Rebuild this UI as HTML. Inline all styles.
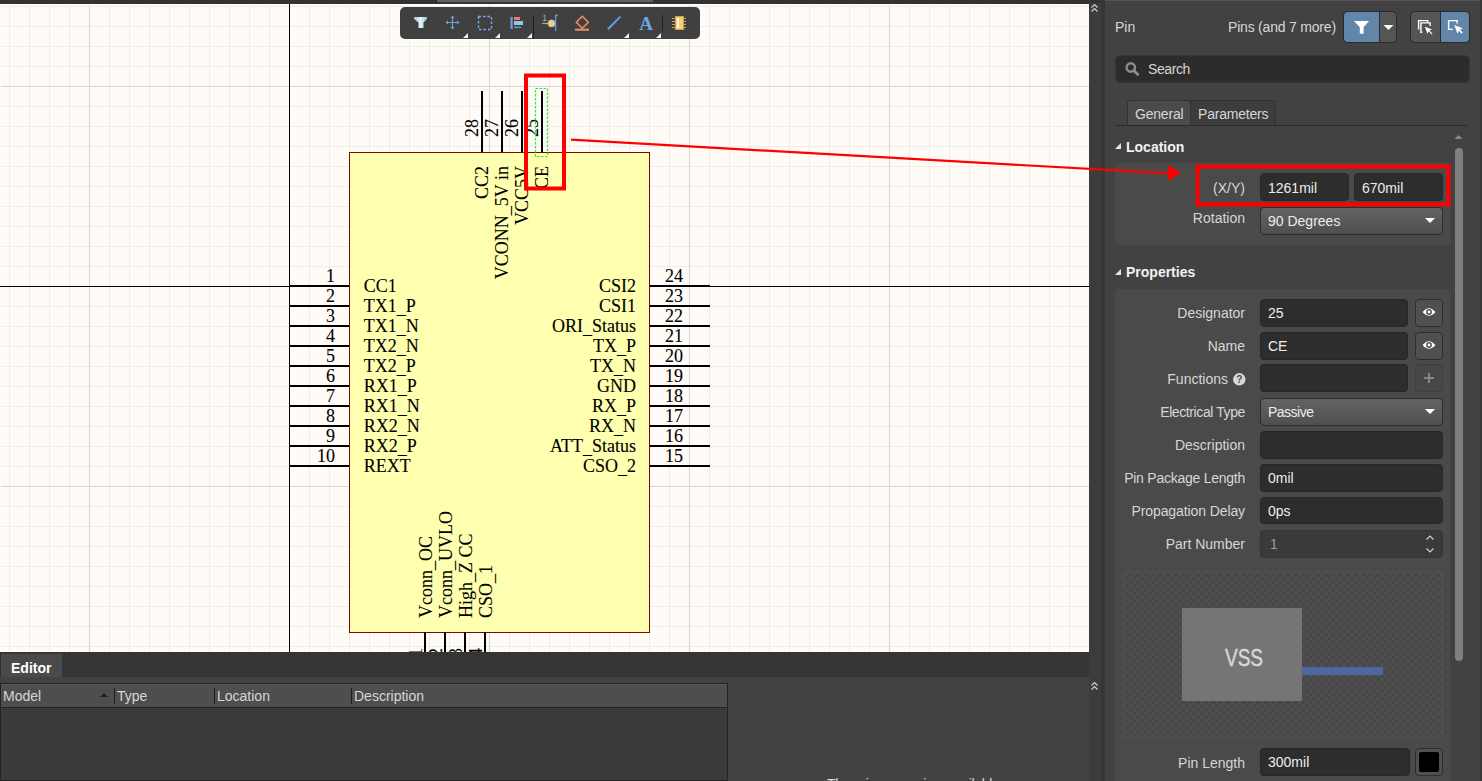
<!DOCTYPE html>
<html><head><meta charset="utf-8"><style>
*{margin:0;padding:0;box-sizing:border-box}
html,body{width:1482px;height:781px;overflow:hidden;background:#424242;font-family:"Liberation Sans",sans-serif}
.abs{position:absolute}
.t{font-size:14px;color:#d6d6d6;white-space:nowrap;line-height:16px}
.v{color:#ececec}
.b{font-weight:bold;color:#f2f2f2}
.inp{background:#2d2d2d;border:1px solid #272727;border-radius:4px}
.dd{background:linear-gradient(#636363,#4f4f4f);border:1px solid #2c2c2c;border-radius:4px}
.btn{background:#505050;border:1px solid #2e2e2e;border-radius:4px}
</style></head><body>
<div class="abs" style="left:0;top:0;width:1089px;height:4px;background:#333"></div>
<svg class="abs" style="left:0;top:0" width="1089" height="652" viewBox="0 0 1089 652">
<rect x="0" y="4" width="1089" height="648" fill="#fffcf8"/><rect x="0" y="4" width="1089" height="1" fill="#ffffff"/>
<path d="M9.5 5V652M29.5 5V652M49.5 5V652M69.5 5V652M109.5 5V652M129.5 5V652M149.5 5V652M169.5 5V652M189.5 5V652M209.5 5V652M229.5 5V652M249.5 5V652M269.5 5V652M309.5 5V652M329.5 5V652M349.5 5V652M369.5 5V652M389.5 5V652M409.5 5V652M429.5 5V652M449.5 5V652M469.5 5V652M509.5 5V652M529.5 5V652M549.5 5V652M569.5 5V652M589.5 5V652M609.5 5V652M629.5 5V652M649.5 5V652M669.5 5V652M709.5 5V652M729.5 5V652M749.5 5V652M769.5 5V652M789.5 5V652M809.5 5V652M829.5 5V652M849.5 5V652M869.5 5V652M909.5 5V652M929.5 5V652M949.5 5V652M969.5 5V652M989.5 5V652M1009.5 5V652M1029.5 5V652M1049.5 5V652M1069.5 5V652M1 6.5H1089M1 26.5H1089M1 46.5H1089M1 66.5H1089M1 106.5H1089M1 126.5H1089M1 146.5H1089M1 166.5H1089M1 186.5H1089M1 206.5H1089M1 226.5H1089M1 246.5H1089M1 266.5H1089M1 306.5H1089M1 326.5H1089M1 346.5H1089M1 366.5H1089M1 386.5H1089M1 406.5H1089M1 426.5H1089M1 446.5H1089M1 466.5H1089M1 506.5H1089M1 526.5H1089M1 546.5H1089M1 566.5H1089M1 586.5H1089M1 606.5H1089M1 626.5H1089M1 646.5H1089" stroke="#ededea" stroke-width="1" fill="none"/><path d="M89.5 5V652M289.5 5V652M489.5 5V652M689.5 5V652M889.5 5V652M1 86.5H1089M1 286.5H1089M1 486.5H1089" stroke="#d6d6d3" stroke-width="1" fill="none"/>
<path d="M289.5 4V652M0 286.5H1089" stroke="#000" stroke-width="1"/>
<rect x="349.5" y="152.5" width="300" height="480" fill="#ffffb0" stroke="#8b0000" stroke-width="1"/>
<path d="M290 286H349M290 306H349M290 326H349M290 346H349M290 366H349M290 386H349M290 406H349M290 426H349M290 446H349M290 466H349M650 286H710M650 306H710M650 326H710M650 346H710M650 366H710M650 386H710M650 406H710M650 426H710M650 446H710M650 466H710M482 91V152M502 91V152M522 91V152M542 91V152M425 632V657M445 632V657M465 632V657M485 632V657" stroke="#000" stroke-width="2" fill="none"/>
<g font-family="Liberation Serif" font-size="18" fill="#000" stroke="#000" stroke-width="0.1"><text x="335" y="282" text-anchor="end">1</text><text x="363.7" y="292">CC1</text><text x="335" y="302" text-anchor="end">2</text><text x="363.7" y="312">TX1<tspan dy="1.5">_</tspan><tspan dy="-1.5">​</tspan>P</text><text x="335" y="322" text-anchor="end">3</text><text x="363.7" y="332">TX1<tspan dy="1.5">_</tspan><tspan dy="-1.5">​</tspan>N</text><text x="335" y="342" text-anchor="end">4</text><text x="363.7" y="352">TX2<tspan dy="1.5">_</tspan><tspan dy="-1.5">​</tspan>N</text><text x="335" y="362" text-anchor="end">5</text><text x="363.7" y="372">TX2<tspan dy="1.5">_</tspan><tspan dy="-1.5">​</tspan>P</text><text x="335" y="382" text-anchor="end">6</text><text x="363.7" y="392">RX1<tspan dy="1.5">_</tspan><tspan dy="-1.5">​</tspan>P</text><text x="335" y="402" text-anchor="end">7</text><text x="363.7" y="412">RX1<tspan dy="1.5">_</tspan><tspan dy="-1.5">​</tspan>N</text><text x="335" y="422" text-anchor="end">8</text><text x="363.7" y="432">RX2<tspan dy="1.5">_</tspan><tspan dy="-1.5">​</tspan>N</text><text x="335" y="442" text-anchor="end">9</text><text x="363.7" y="452">RX2<tspan dy="1.5">_</tspan><tspan dy="-1.5">​</tspan>P</text><text x="335" y="462" text-anchor="end">10</text><text x="363.7" y="472">REXT</text><text x="665" y="282">24</text><text x="636" y="292" text-anchor="end">CSI2</text><text x="665" y="302">23</text><text x="636" y="312" text-anchor="end">CSI1</text><text x="665" y="322">22</text><text x="636" y="332" text-anchor="end">ORI<tspan dy="1.5">_</tspan><tspan dy="-1.5">​</tspan>Status</text><text x="665" y="342">21</text><text x="636" y="352" text-anchor="end">TX<tspan dy="1.5">_</tspan><tspan dy="-1.5">​</tspan>P</text><text x="665" y="362">20</text><text x="636" y="372" text-anchor="end">TX<tspan dy="1.5">_</tspan><tspan dy="-1.5">​</tspan>N</text><text x="665" y="382">19</text><text x="636" y="392" text-anchor="end">GND</text><text x="665" y="402">18</text><text x="636" y="412" text-anchor="end">RX<tspan dy="1.5">_</tspan><tspan dy="-1.5">​</tspan>P</text><text x="665" y="422">17</text><text x="636" y="432" text-anchor="end">RX<tspan dy="1.5">_</tspan><tspan dy="-1.5">​</tspan>N</text><text x="665" y="442">16</text><text x="636" y="452" text-anchor="end">ATT<tspan dy="1.5">_</tspan><tspan dy="-1.5">​</tspan>Status</text><text x="665" y="462">15</text><text x="636" y="472" text-anchor="end">CSO<tspan dy="1.5">_</tspan><tspan dy="-1.5">​</tspan>2</text><text transform="translate(478,137) rotate(-90)">28</text><text transform="translate(488,166) rotate(-90)" text-anchor="end">CC2</text><text transform="translate(498,137) rotate(-90)">27</text><text transform="translate(508,166) rotate(-90)" text-anchor="end">VCONN<tspan dy="1.5">_</tspan><tspan dy="-1.5">​</tspan>5V in</text><text transform="translate(518,137) rotate(-90)">26</text><text transform="translate(528,166) rotate(-90)" text-anchor="end">VCC5V</text><text transform="translate(538,137) rotate(-90)">25</text><text transform="translate(548,166) rotate(-90)" text-anchor="end">CE</text><text transform="translate(422,648) rotate(-90)" text-anchor="end">11</text><text transform="translate(432,618) rotate(-90)">Vconn<tspan dy="1.5">_</tspan><tspan dy="-1.5">​</tspan>OC</text><text transform="translate(442,648) rotate(-90)" text-anchor="end">12</text><text transform="translate(452,618) rotate(-90)">Vconn<tspan dy="1.5">_</tspan><tspan dy="-1.5">​</tspan>UVLO</text><text transform="translate(462,648) rotate(-90)" text-anchor="end">13</text><text transform="translate(472,618) rotate(-90)">High<tspan dy="1.5">_</tspan><tspan dy="-1.5">​</tspan>Z CC</text><text transform="translate(482,648) rotate(-90)" text-anchor="end">14</text><text transform="translate(492,618) rotate(-90)">CSO<tspan dy="1.5">_</tspan><tspan dy="-1.5">​</tspan>1</text></g>
</svg>
<div class="abs" style="left:437px;top:0;width:216px;height:2px;background:#616161"></div>
<div class="abs" style="left:436px;top:0;width:1px;height:3px;background:#262626"></div>
<div class="abs" style="left:400px;top:7px;width:300px;height:32px;background:#404040;border-radius:5px"></div>
<svg class="abs" style="left:400px;top:7px" width="300" height="32" viewBox="400 7 300 32">
 <defs><linearGradient id="fg" x1="0" x2="1"><stop offset="0" stop-color="#8fc4d4"/><stop offset="0.5" stop-color="#e8f6fa"/><stop offset="1" stop-color="#8fc4d4"/></linearGradient></defs>
 <path d="M414 17H427V19L423.5 22.5V28H418.5V22.5L414 19Z" fill="url(#fg)"/>
 <path d="M446.5 22.5H458.5M452.5 16.5V28.5" stroke="#6f9de0" stroke-width="1.2"/>
 <path d="M445.5 22.5L448 20.5V24.5ZM459.5 22.5L457 20.5V24.5ZM452.5 15.5L450.5 18H454.5ZM452.5 29.5L450.5 27H454.5Z" fill="#6f9de0"/>
 <rect x="478.5" y="16.5" width="13" height="13" fill="none" stroke="#7ea8f0" stroke-width="1.4" stroke-dasharray="2.5 2"/>
 <rect x="510.5" y="17" width="2.2" height="12" fill="#6f9de0"/>
 <rect x="514" y="17" width="6" height="3" fill="#e87878"/>
 <rect x="514" y="21" width="9" height="4" fill="#8ccbe6"/>
 <path d="M515 27.3H521" stroke="#6f9de0" stroke-width="1.2"/><path d="M514 27.3L516 25.8V28.8Z" fill="#6f9de0"/>
 <path d="M463 38L468 33V38Z M495 38L500 33V38Z M527 38L532 33V38Z M624 38L629 33V38Z M656 38L661 33V38Z" fill="#f2f2f2"/>
 <rect x="533" y="15" width="1" height="23" fill="#1e1e1e"/>
 <rect x="662" y="15" width="1" height="16" fill="#1e1e1e"/>
 <text x="544.5" y="21" font-family="Liberation Sans" font-size="8.5" fill="#b0b0b0" text-anchor="middle">1</text>
 <path d="M542 23.5H548" stroke="#c8a860" stroke-width="1.2"/>
 <circle cx="551.5" cy="23.4" r="3.6" fill="#e6d0a0" stroke="#c8a860" stroke-width="0.6"/>
 <path d="M557.8 15.5H555.6V31" stroke="#5f9ce8" stroke-width="1.3" fill="none"/>
 <path d="M582.3 16.3L588.3 22.3L582.3 28.3L576.3 22.3Z" fill="none" stroke="#f0906a" stroke-width="1.5"/>
 <rect x="575" y="28.7" width="14" height="2" fill="#f0906a"/>
 <path d="M607.8 29.2L620.4 16.6" stroke="#5fa0e8" stroke-width="2"/>
 <text x="646" y="29.7" font-family="Liberation Serif" font-weight="bold" font-size="19" fill="#6aa8e8" text-anchor="middle">A</text>
 <path d="M672 18.5H686M672 21.5H686M672 24.5H686M672 27.5H686" stroke="#c8a048" stroke-width="1"/>
 <rect x="675.5" y="16.5" width="8" height="13" fill="#f0d080" stroke="#c8a048" stroke-width="1"/>
 <rect x="677" y="18" width="2" height="10" fill="#fff8e0"/>
</svg>

<div class="abs " style="left:1089px;top:0px;width:16px;height:781px;background:#3c3c3c"></div>
<div class="abs " style="left:1101px;top:0px;width:4px;height:781px;background:#363636"></div>
<div class="abs " style="left:1089px;top:0px;width:16px;height:3px;background:#333"></div>
<div class="abs " style="left:1105px;top:0px;width:377px;height:1px;background:#555"></div>
<svg class="abs" style="left:1090px;top:3px" width="10" height="10" viewBox="0 0 10 10"><path d="M1.5 4.5L4.5 1.5L7.5 4.5M1.5 8.5L4.5 5.5L7.5 8.5" stroke="#cfcfcf" stroke-width="1.2" fill="none"/></svg>
<svg class="abs" style="left:1090px;top:681px" width="10" height="10" viewBox="0 0 10 10"><path d="M1.5 4.5L4.5 1.5L7.5 4.5M1.5 8.5L4.5 5.5L7.5 8.5" stroke="#cfcfcf" stroke-width="1.2" fill="none"/></svg>
<div class="abs " style="left:1480px;top:0px;width:2px;height:781px;background:#383838"></div>
<div class="abs t" style="left:1115px;top:19px;">Pin</div>
<div class="abs t" style="left:1228px;top:19px;letter-spacing:-0.2px">Pins (and 7 more)</div>
<div class="abs " style="left:1343px;top:11px;width:54px;height:32px;background:#2a2a2a;border-radius:5px"></div>
<div class="abs " style="left:1344px;top:12px;width:35px;height:30px;background:#6285aa;border-radius:4px 0 0 4px"></div>
<div class="abs " style="left:1380px;top:12px;width:16px;height:30px;background:#555;border-radius:0 4px 4px 0"></div>
<div class="abs " style="left:1410px;top:11px;width:60px;height:32px;background:#2a2a2a;border-radius:5px"></div>
<div class="abs " style="left:1411px;top:12px;width:29px;height:30px;background:#555;border-radius:4px 0 0 4px"></div>
<div class="abs " style="left:1441px;top:12px;width:28px;height:30px;background:#6285aa;border-radius:0 4px 4px 0"></div>
<svg class="abs" style="left:1340px;top:8px" width="132" height="38" viewBox="1340 8 132 38">
 <path d="M1354 21H1369L1363.6 27.3V33.8H1359.8V27.3Z" fill="#fff"/>
 <path d="M1383.5 25H1393.5L1388.5 30Z" fill="#fff"/>
 <path d="M1418.6 29.6V20.6H1427.8V22.3" stroke="#fff" stroke-width="1.4" fill="none"/>
 <path d="M1422.2 32.2H1420.9V22.9H1430.1V26" stroke="#fff" stroke-width="1.4" fill="none"/>
 <path d="M0 0L8.8 3.4L5.7 4.6L8.6 7.5L7.4 8.7L4.6 5.8L3.3 8.8Z" transform="translate(1424.2,26)" fill="#fff" stroke="#3a3a3a" stroke-width="0.6"/>
 <path d="M1457.1 23.5V20.6H1448.6V29.4H1452.8" stroke="#fff" stroke-width="1.4" fill="none"/>
 <path d="M0 0L8.8 3.4L5.7 4.6L8.6 7.5L7.4 8.7L4.6 5.8L3.3 8.8Z" transform="translate(1454.2,25)" fill="#fff"/>
</svg>
<div class="abs " style="left:1115px;top:55px;width:355px;height:28px;background:#2c2c2c;border:1px solid #363636;border-radius:5px"></div>
<svg class="abs" style="left:1124px;top:61px" width="16" height="16" viewBox="0 0 16 16"><circle cx="6.8" cy="6.5" r="4.2" stroke="#8e8e8e" stroke-width="2.4" fill="none"/><path d="M9.8 9.6L13.8 13.6" stroke="#8e8e8e" stroke-width="2.8" stroke-linecap="round"/></svg>
<div class="abs t" style="left:1148px;top:61px;letter-spacing:-0.4px">Search</div>
<div class="abs " style="left:1127px;top:100px;width:64px;height:26px;background:#4b4b4b;border:1px solid #333;border-bottom:none;border-radius:3px 3px 0 0"></div>
<div class="abs " style="left:1190px;top:100px;width:86px;height:26px;background:#3d3d3d;border:1px solid #333;border-bottom:none;border-radius:3px 3px 0 0"></div>
<div class="abs t" style="left:1135px;top:106px;letter-spacing:-0.2px">General</div>
<div class="abs t" style="left:1198px;top:106px;letter-spacing:-0.2px">Parameters</div>
<div class="abs " style="left:1115px;top:125px;width:352px;height:1px;background:#2a2a2a"></div>
<svg class="abs" style="left:1454px;top:132px" width="10" height="8" viewBox="0 0 10 8"><path d="M0.5 7H8.5L4.5 3Z" fill="#868686"/></svg>
<div class="abs " style="left:1455px;top:148px;width:8px;height:513px;background:#808080;border-radius:4px"></div>
<svg class="abs" style="left:1114px;top:142px" width="8" height="8" viewBox="0 0 8 8"><path d="M1 7H7V1Z" fill="#e6e6e6"/></svg>
<div class="abs t b" style="left:1126px;top:139px;">Location</div>
<div class="abs " style="left:1115px;top:163px;width:335px;height:82px;background:#4a4a4a;border-radius:4px"></div>
<div class="abs t" style="left:1045px;width:200px;text-align:right;top:180px;">(X/Y)</div>
<div class="abs inp" style="left:1260px;top:173px;width:89px;height:28px;"></div>
<div class="abs inp" style="left:1354px;top:173px;width:89px;height:28px;"></div>
<div class="abs t v" style="left:1268px;top:180px;">1261mil</div>
<div class="abs t v" style="left:1362px;top:180px;">670mil</div>
<div class="abs t" style="left:1045px;width:200px;text-align:right;top:210px;">Rotation</div>
<div class="abs dd" style="left:1260px;top:207px;width:183px;height:28px;"></div>
<div class="abs t v" style="left:1268px;top:213px;">90 Degrees</div>
<svg class="abs" style="left:1424px;top:217px" width="12" height="8" viewBox="0 0 12 8"><path d="M1 1H11L6 6Z" fill="#fff"/></svg>
<svg class="abs" style="left:1114px;top:268px" width="8" height="8" viewBox="0 0 8 8"><path d="M1 7H7V1Z" fill="#e6e6e6"/></svg>
<div class="abs t b" style="left:1126px;top:264px;">Properties</div>
<div class="abs " style="left:1115px;top:289px;width:335px;height:500px;background:#4a4a4a;border-radius:4px"></div>
<div class="abs t" style="left:1045px;width:200px;text-align:right;top:305px;">Designator</div>
<div class="abs inp" style="left:1260px;top:299px;width:148px;height:28px;"></div>
<div class="abs t v" style="left:1268px;top:305px;">25</div>
<div class="abs btn" style="left:1415px;top:299px;width:28px;height:28px;"></div>
<svg class="abs" style="left:1421px;top:306px" width="16" height="12" viewBox="0 0 16 12"><path d="M1.6 6Q8 -1.6 14.4 6Q8 13.6 1.6 6Z" fill="#fff"/><circle cx="8" cy="6" r="2.9" fill="#505050"/><circle cx="8" cy="6" r="1.4" fill="#fff"/></svg>
<div class="abs t" style="left:1045px;width:200px;text-align:right;top:338px;">Name</div>
<div class="abs inp" style="left:1260px;top:332px;width:148px;height:28px;"></div>
<div class="abs t v" style="left:1268px;top:338px;">CE</div>
<div class="abs btn" style="left:1415px;top:332px;width:28px;height:28px;"></div>
<svg class="abs" style="left:1421px;top:339px" width="16" height="12" viewBox="0 0 16 12"><path d="M1.6 6Q8 -1.6 14.4 6Q8 13.6 1.6 6Z" fill="#fff"/><circle cx="8" cy="6" r="2.9" fill="#505050"/><circle cx="8" cy="6" r="1.4" fill="#fff"/></svg>
<div class="abs t" style="left:1028px;width:200px;text-align:right;top:371px;">Functions</div>
<svg class="abs" style="left:1233px;top:373px" width="13" height="13" viewBox="0 0 13 13"><circle cx="6.3" cy="6.3" r="6.2" fill="#d8d8d8"/><text x="6.3" y="10.3" font-family="Liberation Sans" font-weight="bold" font-size="10" text-anchor="middle" fill="#4a4a4a">?</text></svg>
<div class="abs inp" style="left:1260px;top:364px;width:148px;height:28px;"></div>
<div class="abs btn" style="left:1415px;top:364px;width:28px;height:28px;background:#474747;border-color:#3e3e3e"></div>
<svg class="abs" style="left:1423px;top:372px" width="12" height="12" viewBox="0 0 12 12"><path d="M6 1V11M1 6H11" stroke="#858585" stroke-width="2.2"/></svg>
<div class="abs t" style="left:1045px;width:200px;text-align:right;top:404px;letter-spacing:-0.4px">Electrical Type</div>
<div class="abs dd" style="left:1260px;top:398px;width:183px;height:28px;"></div>
<div class="abs t v" style="left:1268px;top:404px;letter-spacing:-0.5px">Passive</div>
<svg class="abs" style="left:1424px;top:408px" width="12" height="8" viewBox="0 0 12 8"><path d="M1 1H11L6 6Z" fill="#fff"/></svg>
<div class="abs t" style="left:1045px;width:200px;text-align:right;top:437px;">Description</div>
<div class="abs inp" style="left:1260px;top:431px;width:183px;height:28px;"></div>
<div class="abs t" style="left:1045px;width:200px;text-align:right;top:470px;letter-spacing:-0.25px">Pin Package Length</div>
<div class="abs inp" style="left:1260px;top:464px;width:183px;height:28px;"></div>
<div class="abs t v" style="left:1268px;top:470px;">0mil</div>
<div class="abs t" style="left:1045px;width:200px;text-align:right;top:503px;letter-spacing:-0.1px">Propagation Delay</div>
<div class="abs inp" style="left:1260px;top:497px;width:183px;height:27px;"></div>
<div class="abs t v" style="left:1268px;top:503px;">0ps</div>
<div class="abs t" style="left:1045px;width:200px;text-align:right;top:536px;">Part Number</div>
<div class="abs inp" style="left:1260px;top:530px;width:183px;height:28px;background:#3a3a3a;border-color:#343434"></div>
<div class="abs t" style="left:1270px;top:536px;color:#9a9a9a">1</div>
<svg class="abs" style="left:1425px;top:532px" width="10" height="24" viewBox="0 0 10 24"><path d="M1.5 7.5L5 4L8.5 7.5M1.5 16.5L5 20L8.5 16.5" stroke="#cfcfcf" stroke-width="1.2" fill="none"/></svg>
<div class="abs " style="left:1123px;top:571px;width:320px;height:167px;border:1px solid #525252;background-color:#4f4f4f;background-image:linear-gradient(45deg,#474747 25%,transparent 25%,transparent 75%,#474747 75%),linear-gradient(45deg,#474747 25%,transparent 25%,transparent 75%,#474747 75%);background-size:7.5px 7.5px;background-position:1px 1px,4.75px 4.75px"></div>
<div class="abs " style="left:1182px;top:608px;width:120px;height:93px;background:#757575"></div>
<div class="abs" style="left:1184px;top:645px;width:120px;text-align:center;font-size:23px;line-height:26px;color:#d8d8d8;-webkit-text-stroke:0.4px #d8d8d8;transform:scaleX(0.83)">VSS</div>
<div class="abs " style="left:1302px;top:667px;width:81px;height:8px;background:#4f67a0"></div>
<div class="abs t" style="left:1045px;width:200px;text-align:right;top:755px;">Pin Length</div>
<div class="abs inp" style="left:1260px;top:748px;width:150px;height:28px;"></div>
<div class="abs t v" style="left:1268px;top:754px;">300mil</div>
<div class="abs btn" style="left:1415px;top:748px;width:28px;height:28px;"></div>
<div class="abs " style="left:1419px;top:752px;width:20px;height:20px;background:#000;border-radius:2px"></div>
<div class="abs " style="left:0px;top:652px;width:1089px;height:25px;background:#353535"></div>
<div class="abs " style="left:0px;top:653px;width:62px;height:24px;background:#4a4a4a;border-left:1px solid #2e2e2e;border-top:1px solid #3a3a3a"></div>
<div class="abs t b" style="left:11px;top:660px;color:#fff">Editor</div>
<div class="abs " style="left:0px;top:677px;width:1089px;height:104px;background:#424242"></div>
<div class="abs " style="left:0px;top:683px;width:728px;height:98px;background:#3a3a3a;border:1px solid #232323"></div>
<div class="abs " style="left:1px;top:684px;width:726px;height:24px;background:#4e4e4e;border-top:1px solid #5a5a5a;border-bottom:1px solid #232323"></div>
<div class="abs " style="left:114px;top:688px;width:1px;height:16px;background:#1e1e1e"></div>
<div class="abs " style="left:214px;top:688px;width:1px;height:16px;background:#1e1e1e"></div>
<div class="abs " style="left:351px;top:688px;width:1px;height:16px;background:#1e1e1e"></div>
<div class="abs t" style="left:3px;top:688px;">Model</div>
<div class="abs t" style="left:117px;top:688px;">Type</div>
<div class="abs t" style="left:217px;top:688px;">Location</div>
<div class="abs t" style="left:354px;top:688px;">Description</div>
<svg class="abs" style="left:99px;top:692px" width="10" height="6" viewBox="0 0 10 6"><path d="M1 5H9L5 1Z" fill="#222"/></svg>
<div class="abs t" style="left:827px;top:776px;letter-spacing:-0.3px">There is no preview available</div>
<svg class="abs" style="left:0;top:0;pointer-events:none" width="1482" height="781" viewBox="0 0 1482 781">
 <rect x="535.5" y="88.5" width="12" height="68" fill="none" stroke="#22ee22" stroke-width="1.2" stroke-dasharray="2.5 1.5"/>
 <rect x="526" y="75.5" width="38" height="113" fill="none" stroke="#ff0000" stroke-width="4"/>
 <path d="M571 139.7L1170 173.4" stroke="#ff0000" stroke-width="2.2"/>
 <path d="M1181 173L1168 165V181Z" fill="#ff0000"/>
 <rect x="1197.5" y="166.5" width="251" height="38" fill="none" stroke="#ff0000" stroke-width="4"/>
</svg>

</body></html>
